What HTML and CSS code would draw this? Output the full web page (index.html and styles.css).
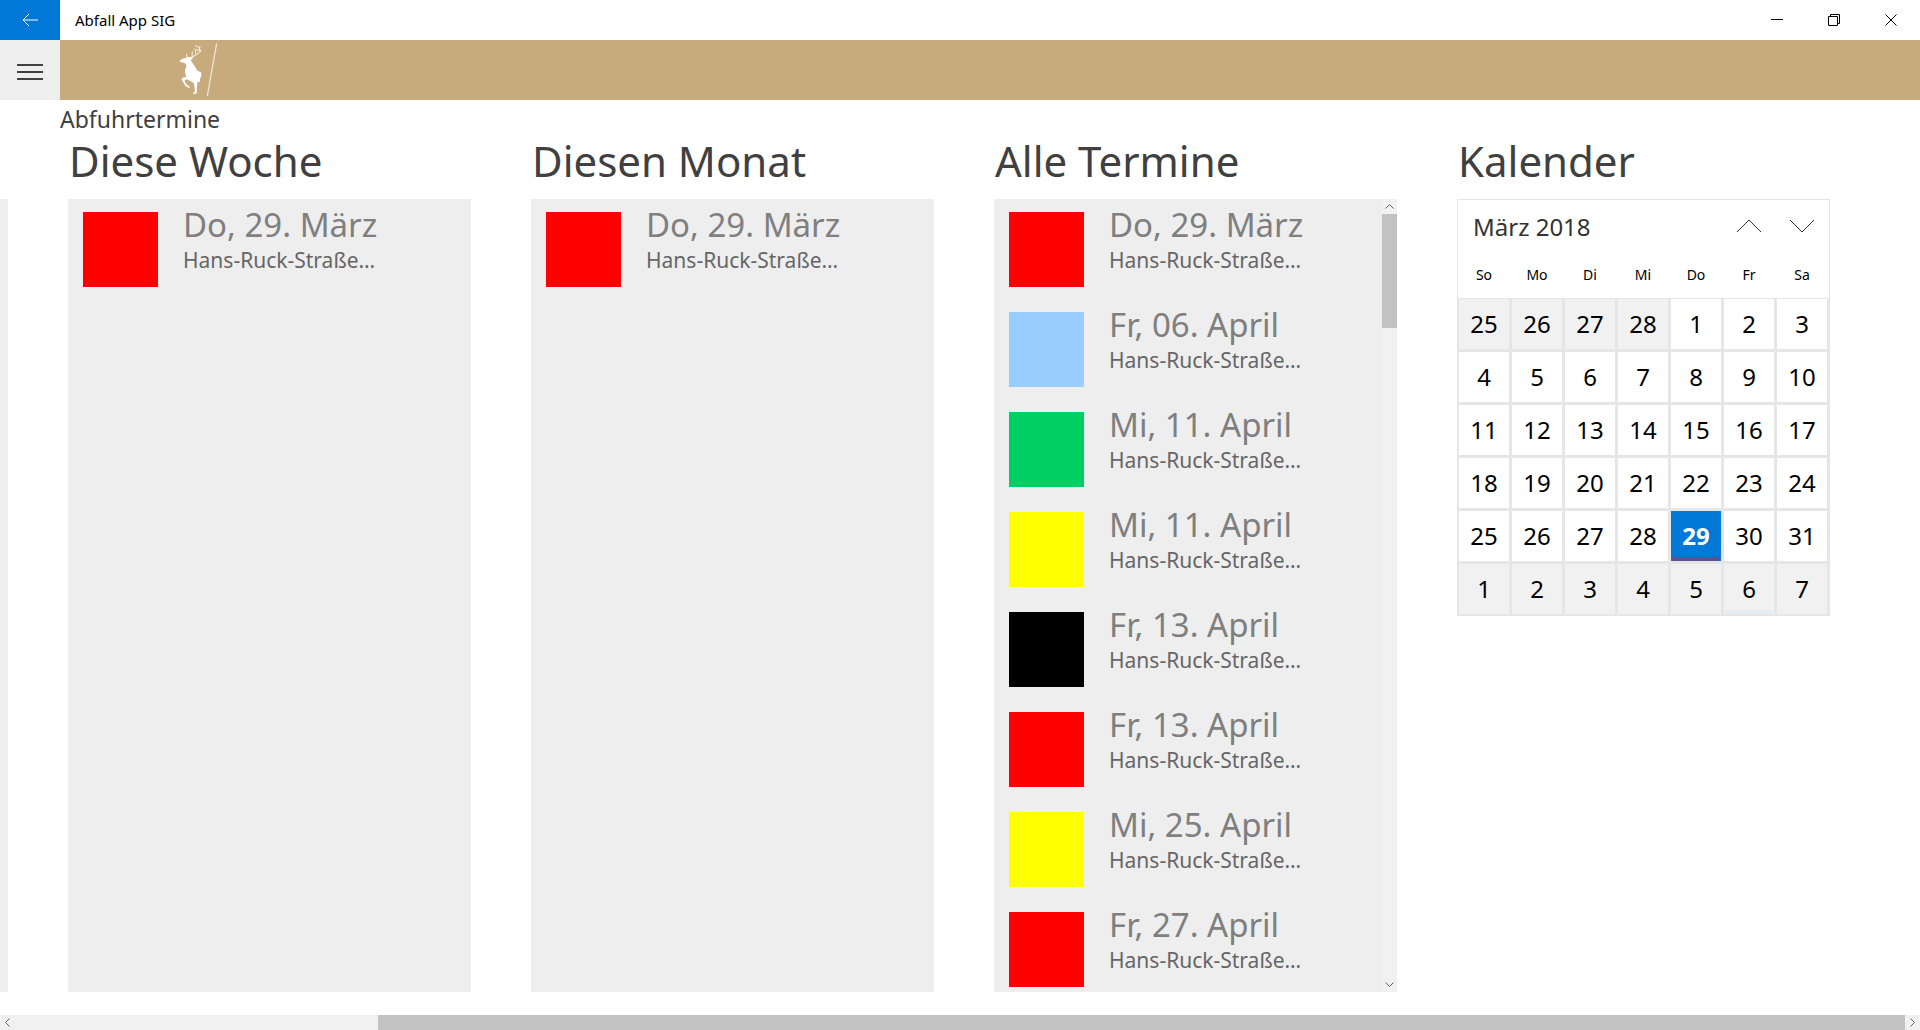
FILE: index.html
```html
<!DOCTYPE html>
<html lang="de">
<head>
<meta charset="utf-8">
<title>Abfall App SIG</title>
<link rel="stylesheet" href="styles.css">
</head>
<body>
<header class="titlebar">
  <button class="back" aria-label="Zurück"><svg width="16" height="14" viewBox="0 0 16 14"><path d="M7 1 1 7l6 6M1 7h15"/></svg></button>
  <span class="app-name">Abfall App SIG</span>
  <div class="window-controls">
    <button aria-label="Minimieren"><svg width="12" height="12" viewBox="0 0 12 12"><path d="M0 5.500h12"/></svg></button>
    <button aria-label="Verkleinern"><svg width="12" height="12" viewBox="0 0 12 12"><path d="M.5 2.500h9v9h-9zM2.500 2.500v-2h9v9h-2"/></svg></button>
    <button aria-label="Schließen"><svg width="12" height="12" viewBox="0 0 12 12"><path d="m.5.5 11 11m0-11-11 11"/></svg></button>
  </div>
</header>
<div class="brandbar">
  <button class="menu" aria-label="Menü"><svg width="26" height="16" viewBox="0 0 26 16"><path d="M0 1h26M0 8h26M0 15h26"/></svg></button>
  <svg class="logo" width="42" height="60" viewBox="528 120 126 180" role="img" aria-label="Logo">
    <path class="deer" d="M538 182 548 176 558 173 568 171 580 173 576 178 572 181 577 188 585 200 592 212 603 217 604 227 600 237 600 245 592 247 591 261 590 280 582 283 579 280 584 276 584 263 581 249 571 243 561 238 554 241 555 246 561 254 570 261 568 264 557 259 549 246 545 239 547 233 559 231 556 222 555 210 559 200 558 192 552 188 542 187z"/>
    <path class="antlers" d="M563 174c-3-5-4-9-3-13M566 174c12-3 22-9 29-14 5-3 7-6 5-11-2-5-7-9-14-12M577 167c-1-5-1-8 1-12M588 162c-2-4-2-7-1-10M600 149c-4 3-12 2-17-2M598 156c3-1 4-2 5-4M597 146c3-2 3-4 2-7"/>
    <path class="slash" d="M650 130 622 288"/>
  </svg>
</div>
<h1 class="page-title">Abfuhrtermine</h1>
<main class="hub">
  <div class="previous-panel"></div>
  <section class="section">
    <h2>Diese Woche</h2>
    <div class="panel"><ul class="dates">
      <li><i class="swatch red"></i><div><strong>Do, 29. März</strong><span>Hans-Ruck-Straße…</span></div></li>
    </ul></div>
  </section>
  <section class="section">
    <h2>Diesen Monat</h2>
    <div class="panel"><ul class="dates">
      <li><i class="swatch red"></i><div><strong>Do, 29. März</strong><span>Hans-Ruck-Straße…</span></div></li>
    </ul></div>
  </section>
  <section class="section">
    <h2>Alle Termine</h2>
    <div class="panel">
      <ul class="dates">
        <li><i class="swatch red"></i><div><strong>Do, 29. März</strong><span>Hans-Ruck-Straße…</span></div></li>
        <li><i class="swatch blue"></i><div><strong>Fr, 06. April</strong><span>Hans-Ruck-Straße…</span></div></li>
        <li><i class="swatch green"></i><div><strong>Mi, 11. April</strong><span>Hans-Ruck-Straße…</span></div></li>
        <li><i class="swatch yellow"></i><div><strong>Mi, 11. April</strong><span>Hans-Ruck-Straße…</span></div></li>
        <li><i class="swatch black"></i><div><strong>Fr, 13. April</strong><span>Hans-Ruck-Straße…</span></div></li>
        <li><i class="swatch red"></i><div><strong>Fr, 13. April</strong><span>Hans-Ruck-Straße…</span></div></li>
        <li><i class="swatch yellow"></i><div><strong>Mi, 25. April</strong><span>Hans-Ruck-Straße…</span></div></li>
        <li><i class="swatch red"></i><div><strong>Fr, 27. April</strong><span>Hans-Ruck-Straße…</span></div></li>
      </ul>
      <div class="scrollbar vertical">
        <button aria-label="Nach oben"><svg width="9" height="5" viewBox="0 0 9 5"><path d="m.5 4.500 4-4 4 4"/></svg></button>
        <div class="track"><div class="thumb"></div></div>
        <button aria-label="Nach unten"><svg width="9" height="5" viewBox="0 0 9 5"><path d="m.5.5 4 4 4-4"/></svg></button>
      </div>
    </div>
  </section>
  <section class="section calendar-section">
    <h2>Kalender</h2>
    <div class="calendar">
      <div class="calendar-head">
        <button class="month">März 2018</button>
        <button class="step" aria-label="Voriger Monat"><svg width="26" height="14" viewBox="0 0 26 14"><path d="M1 13 13 1l12 12"/></svg></button>
        <button class="step" aria-label="Nächster Monat"><svg width="26" height="14" viewBox="0 0 26 14"><path d="m1 1 12 12L25 1"/></svg></button>
      </div>
      <div class="weekdays"><span>So</span><span>Mo</span><span>Di</span><span>Mi</span><span>Do</span><span>Fr</span><span>Sa</span></div>
      <div class="days">
        <button class="out">25</button><button class="out">26</button><button class="out">27</button><button class="out">28</button><button>1</button><button>2</button><button>3</button>
        <button>4</button><button>5</button><button>6</button><button>7</button><button>8</button><button>9</button><button>10</button>
        <button>11</button><button>12</button><button>13</button><button>14</button><button>15</button><button>16</button><button>17</button>
        <button>18</button><button>19</button><button>20</button><button>21</button><button>22</button><button>23</button><button>24</button>
        <button>25</button><button>26</button><button>27</button><button>28</button><button class="today">29</button><button>30</button><button>31</button>
        <button class="out">1</button><button class="out">2</button><button class="out">3</button><button class="out">4</button><button class="out">5</button><button class="out marked">6</button><button class="out">7</button>
      </div>
    </div>
  </section>
</main>
<div class="scrollbar horizontal">
  <button aria-label="Nach links"><svg width="5" height="9" viewBox="0 0 5 9"><path d="m4.500.5-4 4 4 4"/></svg></button>
  <div class="track"><div class="thumb"></div></div>
  <button aria-label="Nach rechts"><svg width="5" height="9" viewBox="0 0 5 9"><path d="m.5.5 4 4-4 4"/></svg></button>
</div>
</body>
</html>
```
FILE: styles.css
```css
* { box-sizing: border-box; }

body {
  margin: 0;
  height: 100vh;
  display: flex;
  flex-direction: column;
  overflow: hidden;
  background: #fff;
  color: #404040;
  font-family: "Segoe UI", "Noto Sans", sans-serif;
}

h1, h2, ul { margin: 0; padding: 0; font-weight: 400; list-style: none; }

button {
  display: flex;
  align-items: center;
  justify-content: center;
  padding: 0;
  border: 0;
  background: none;
  color: inherit;
  font: inherit;
}

svg { display: block; fill: none; stroke: currentColor; }

/* Window title bar */
.titlebar { flex: none; display: flex; align-items: center; height: 40px; color: #000; }
.back { width: 60px; height: 40px; background: #0078d7; color: #fff; }
.app-name { margin-left: 15px; font-size: 15px; line-height: 20px; }
.window-controls { display: flex; margin-left: auto; padding-right: 1px; }
.window-controls button { width: 57px; height: 40px; }

/* Brand bar */
.brandbar { flex: none; display: flex; height: 60px; background: #c7ab7c; }
.menu { width: 60px; height: 60px; padding-top: 4px; background: #eee; }
.menu svg { stroke-width: 2; }
.logo { margin-left: 116px; stroke: none; }
.deer { fill: #fff; }
.antlers { stroke: #fff; stroke-width: 3; }
.slash { stroke: #eee4d5; stroke-width: 4; }

.page-title { flex: none; padding-left: 60px; font-size: 23px; line-height: 38px; }

/* Hub with its sections side by side */
.hub { flex: 1; min-height: 0; display: flex; gap: 60px; padding-bottom: 23px; }
.previous-panel { flex: none; width: 8px; margin-top: 61px; background: #eee; }
.section { flex: none; width: 403px; display: flex; flex-direction: column; }
.section h2 { flex: none; height: 61px; padding-left: 1px; font-size: 42px; line-height: 46px; }
.calendar-section { width: 373px; }
.panel { flex: 1; min-height: 0; display: flex; background: #eee; }

.dates { flex: 1; overflow: hidden; }
.dates li { display: flex; gap: 25px; height: 100px; padding-left: 15px; }
.dates li div { padding-top: 4px; }
.dates strong { display: block; color: #7f7f7f; font-size: 33px; font-weight: 400; line-height: 44px; }
.dates span { display: block; color: #666; font-size: 21px; line-height: 26px; }

.swatch { width: 75px; height: 75px; margin-top: 13px; }
.red { background: #f00; }
.blue { background: #9cf; }
.green { background: #00cf64; }
.yellow { background: #ff0; }
.black { background: #000; }

/* Scroll bars */
.scrollbar { flex: none; display: flex; background: #f1f1f1; color: #606060; }
.scrollbar button { width: 15px; height: 15px; }
.scrollbar .track { flex: 1; display: flex; }
.scrollbar .thumb { background: #c2c2c2; }
.vertical { flex-direction: column; }
.vertical .thumb { width: 100%; height: 15%; }
.horizontal .track { justify-content: flex-end; }
.horizontal .thumb { width: 80.8%; }

/* Calendar */
.calendar { border: 1px solid #e6e6e6; color: #000; }
.calendar-head { display: flex; height: 52px; padding-right: 1px; }
.month { flex: 1; justify-content: flex-start; padding-left: 15px; color: #333; font-size: 24px; }
.step { width: 53px; color: #333; }
.weekdays, .days { display: grid; grid-template-columns: repeat(7, 1fr); column-gap: 3px; padding: 0 2px 0 1px; }
.weekdays { height: 46px; font-size: 14px; line-height: 46px; text-align: center; }
.days { row-gap: 3px; padding-top: 1px; padding-bottom: 1px; background: #e6e6e6; }
.days button { height: 50px; background: #fff; font-size: 24px; line-height: 32px; }
.days .out { background: #f1f1f1; }
.days .today {
  border: solid #0078d7;
  border-width: 0 1px;
  background: linear-gradient(#0078d7 46px, #5e4f91 46px);
  color: #fff;
  font-weight: 700;
}
.days .marked { border: solid #f1f1f1; border-width: 0 1px; background: linear-gradient(#f1f1f1 46px, #e6edf4 46px); }
```
